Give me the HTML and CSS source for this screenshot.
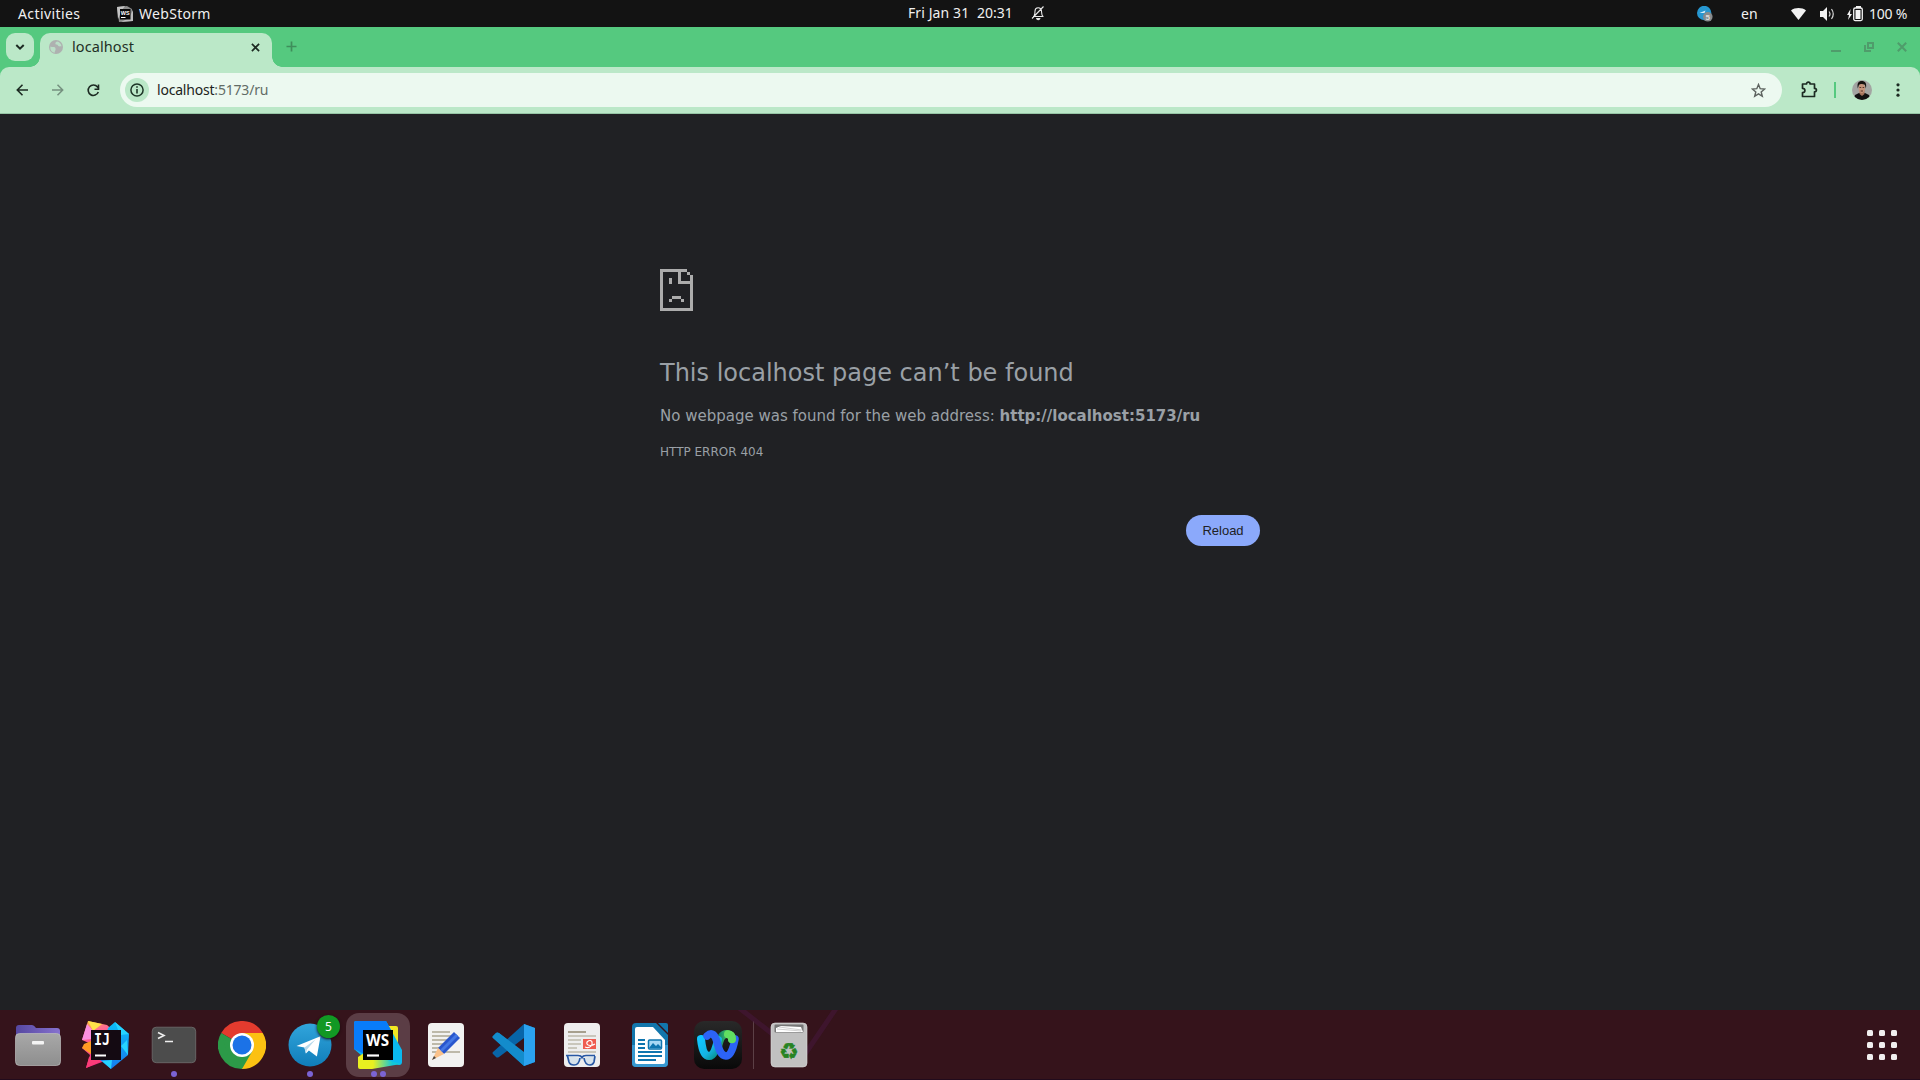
FILE: index.html
```html
<!DOCTYPE html>
<html lang="en">
<head>
<meta charset="utf-8">
<title>localhost</title>
<link rel="stylesheet" href="styles.css">
</head>
<body>
<div class="desktop">
  <header class="topbar">
    <div class="topbar-left">
      <span class="activities">Activities</span>
      <svg class="app-icon" width="16" height="16" viewBox="0 0 16 16"><path d="M0 1 10 0l5 3 1 12-14 1z" fill="#8b8b8b"/><path d="M0 1 8 0 5 4 1 13z" fill="#c4c4c4"/><path d="M12 12l4-8v11l-12 1z" fill="#bdbdbd"/><rect x="3" y="3" width="10.500" height="10.500" fill="#080808"/><text x="3.700" y="8.800" class="ws-mini">WS</text><path d="M4 11.500h4.500" stroke="#fff"/></svg>
      <span class="app-name">WebStorm</span>
    </div>
    <div class="topbar-clock">
      <span class="date">Fri Jan 31</span><span class="time">20:31</span>
      <svg class="bell" width="14" height="15" viewBox="0 0 14 15" fill="none" stroke="#e9e9e9" stroke-width="1.100"><path d="M2 10.500h10.500M3 10c1-1 .9-3 1-5 .1-4 6-4.500 6.500 0 .1 2 0 4 1.500 5.500M1 12.500 12.500.5"/><path d="M5 12h4.500c-.5 3-4 3-4.500 0z" fill="#e9e9e9" stroke="none"/></svg>
    </div>
    <div class="tray">
      <svg class="tray-telegram" width="16" height="16" viewBox="0 0 16 16"><circle cx="7.200" cy="7" r="7.200" fill="#2697d1"/><path d="M2.500 7 8.500 4.500 7.500 7z" fill="#d9eef8"/><circle cx="10.800" cy="10.800" r="4.800" fill="#878b8d"/><text x="8.600" y="13.800" class="tray-num">5</text></svg>
      <span class="lang">en</span>
      <svg class="wifi" width="15" height="12" viewBox="0 0 15 12"><path d="M0 2.500C4-.7 11-.7 15 2.500L7.500 12z" fill="#f2f2f2"/></svg>
      <svg class="volume" width="15" height="14" viewBox="0 0 15 14"><path d="M0 4h3l4-4v14L3 10H0z" fill="#f2f2f2"/><path d="M9 4.500q2 2.500 0 5M11.500 2q3.500 5 0 10" fill="none" stroke="#d7d7d7" stroke-width="1.200"/></svg>
      <svg class="battery" width="17" height="16" viewBox="0 0 17 16"><path d="M3.500 3 0 9h2l-1 5 4-6H3z" fill="#f2f2f2"/><path d="M9 0h5v2H9z" fill="#f2f2f2"/><rect x="6.700" y="2" width="8.600" height="12.600" rx="1.500" fill="none" stroke="#f2f2f2" stroke-width="1.300"/><rect x="8.500" y="4" width="5" height="9" fill="#f2f2f2"/></svg>
      <span class="percent">100 %</span>
    </div>
  </header>

  <section class="browser">
    <div class="tabstrip">
      <div class="tab-search"><svg width="10" height="6" viewBox="0 0 10 6"><path d="m1.300 1 3.700 3.600L8.700 1" fill="none" stroke="#1c2a22" stroke-width="2"/></svg></div>
      <div class="tab">
        <svg class="favicon" width="14" height="14" viewBox="0 0 14 14"><circle cx="7" cy="7" r="7" fill="#aeb1b0"/><path d="M1.500 6.500C3 7.500 6 6 6.500 8.500S5 11.500 6 12.800C2.500 12.500.8 9.500 1.500 6.500zM8 1.500c-1 1-2 1-1.500 2.700C8 5 8 3.800 9 5.500c1 1.500 2.500.5 3.500 1C12.500 4 10.500 1.800 8 1.500z" fill="#badfc7"/></svg>
        <span class="tab-title">localhost</span>
        <svg class="tab-close" width="9" height="9" viewBox="0 0 9 9"><path d="m.9.9 7.200 7.200M8.100.9.9 8.100" stroke="#1c2a22" stroke-width="1.700"/></svg>
      </div>
      <svg class="new-tab" width="11" height="11" viewBox="0 0 11 11"><path d="M5.500.5v10M.5 5.500h10" stroke="#3f8e5b" stroke-width="1.700"/></svg>
      <div class="window-buttons">
        <svg width="10" height="10" viewBox="0 0 10 10"><path d="M0 9h10" stroke="#4f9c6b" stroke-width="2"/></svg>
        <svg width="10" height="10" viewBox="0 0 10 10"><path d="M4 1h5v5H4zM1 3v6h6" fill="none" stroke="#4f9c6b" stroke-width="2"/></svg>
        <svg width="10" height="10" viewBox="0 0 10 10"><path d="m.8.8 8.400 8.400M9.200.8.800 9.200" stroke="#4f9c6b" stroke-width="2"/></svg>
      </div>
    </div>
    <div class="toolbar">
      <svg class="nav-back" width="12" height="12" viewBox="0 0 12 12"><path d="M12 6H1.500M6.500.8 1.300 6l5.200 5.200" fill="none" stroke="#1c2a22" stroke-width="1.600"/></svg>
      <svg class="nav-forward" width="12" height="12" viewBox="0 0 12 12"><path d="M0 6h10.500M5.500.8 10.700 6l-5.200 5.200" fill="none" stroke="#75907f" stroke-width="1.500"/></svg>
      <svg class="nav-reload" width="13" height="13" viewBox="0 0 13 13"><path d="M11.300 8A5.200 5.200 0 1 1 10.500 3L12 4.700M11.500 .5v4.700H7.500" fill="none" stroke="#1c2a22" stroke-width="1.600"/></svg>
      <div class="omnibox">
        <span class="site-info"><svg width="14" height="14" viewBox="0 0 14 14"><circle cx="7" cy="7" r="6.100" fill="none" stroke="#1d3527" stroke-width="1.500"/><path d="M7 6v4.500M7 3.300v1.500" stroke="#1d3527" stroke-width="1.600"/></svg></span>
        <span class="url"><span class="host">localhost</span>:5173/ru</span>
        <svg class="star" width="15" height="15" viewBox="0 0 15 15"><path d="m7.500 1.500 1.700 4.200 4.500.3-3.500 2.900 1.100 4.400-3.800-2.400-3.800 2.400 1.100-4.400L1.300 6l4.500-.3z" fill="none" stroke="#5c625e" stroke-width="1.400"/></svg>
      </div>
      <svg class="puzzle" width="17" height="17" viewBox="0 0 17 17"><path d="M1.500 3h4c0-2.500 3.600-2.500 3.600 0H13.500v4.400c2.600 0 2.600 3.400 0 3.400V15.500H1.500v-4c3.200 0 3.200-4.200 0-4.200z" fill="none" stroke="#1c2a22" stroke-width="1.700" stroke-linejoin="round"/></svg>
      <span class="toolbar-divider"></span>
      <svg class="avatar" width="20" height="20" viewBox="0 0 20 20"><defs><clipPath id="face-clip"><circle cx="10" cy="10" r="10"/></clipPath></defs><g clip-path="url(#face-clip)"><path d="M0 0h20v20H0z" fill="#a3a5a2"/><path d="M1 20l2-5 4-2h6l4 2 2 5z" fill="#111"/><path d="M7.500 10h5v4L10 16l-2.500-2z" fill="#a5745c"/><ellipse cx="9.800" cy="8.300" rx="3.200" ry="4.900" fill="#c4937a"/><path d="M5.800 8.500C4.800 3 6.500 1 9.800 1S15 3 13.900 8.500l-1.100-3.800C11 3.800 8 3.800 6.900 5z" fill="#17120f"/><path d="M7.500 7.500h1.700m1.400 0h1.600M8.700 11h2.300" stroke="#4b2b22" stroke-width=".9"/></g></svg>
      <svg class="menu" width="4" height="14" viewBox="0 0 4 14" fill="#1c2a22"><circle cx="2" cy="1.800" r="1.600"/><circle cx="2" cy="7" r="1.600"/><circle cx="2" cy="12.200" r="1.600"/></svg>
    </div>
    <main class="page">
      <div class="error">
        <svg class="sad-page" width="33" height="42" viewBox="0 0 11 14" fill="#acacac" shape-rendering="crispEdges"><path d="M0 0h9v1h1v1h1v12H0zM1 1v12h9V5H6V1zM7 1v3h3V2H9V1zM3 3h1v2H3zM4 9h3v1H4zM3 10h1v1H3zM7 10h1v1H7z" fill-rule="evenodd"/></svg>
        <h1>This localhost page can’t be found</h1>
        <p>No webpage was found for the web address: <strong>http://localhost:5173/ru</strong></p>
        <div class="error-code">HTTP ERROR 404</div>
        <button class="reload">Reload</button>
      </div>
    </main>
  </section>

  <footer class="dock">
    <svg class="wallpaper" width="110" height="70" viewBox="0 0 110 70" fill="none" stroke="#45183a" stroke-width="5"><path d="m0-3 46 36M99-3 63 50" opacity=".6"/></svg>
    <div class="dock-item"><svg width="48" height="48" viewBox="0 0 48 48"><defs><linearGradient id="folder" x2="0" y2="1"><stop stop-color="#a8a8a8"/><stop offset="1" stop-color="#8e8e8e"/></linearGradient><linearGradient id="tabfold"><stop stop-color="#5547a0"/><stop offset="1" stop-color="#8772cf"/></linearGradient></defs><path d="M2 7q0-3 3-3h13q2 0 4 3h21q3 0 3 3v16H2z" fill="url(#tabfold)"/><rect x="1.500" y="12.500" width="45" height="32" rx="4" fill="url(#folder)" stroke="#bdbdbd" stroke-width=".7"/><rect x="18" y="20" width="12" height="3.500" rx="1" fill="#f4f4f4"/></svg></div>
    <div class="dock-item"><svg width="48" height="48" viewBox="0 0 48 48"><defs><linearGradient id="ijl" x2=".3" y2="1"><stop stop-color="#ffc52e"/><stop offset=".3" stop-color="#ff6b93"/><stop offset="1" stop-color="#f7267e"/></linearGradient><linearGradient id="ijr" x2="0" y2="1"><stop stop-color="#0cbef7"/><stop offset="1" stop-color="#167bed"/></linearGradient></defs><path d="M6 0 25 4l9 8v26l-14 3-16 6 4-13-8-7 7-5-7-3z" fill="url(#ijl)"/><path d="M5 3 0 19l10-1 2-7z" fill="#fc8fe0"/><path d="m6 0 5 10 9-7z" fill="#ffe14a"/><path d="M2 23l7-3v13l-9-6z" fill="#ff9b22"/><path d="M7 36 4 47l18-8z" fill="#fb3c78"/><path d="m33 1 14 12-1 21-17 14-11-9 8-32z" fill="url(#ijr)"/><path d="m33 1 5 13 9-1zM30 39l-10 1 9 8zM39 25l7 9-1-15z" fill="#26d3ff"/><path d="M9 9h30v30H9z" fill="#140a12"/><text x="12" y="24" class="ij-label" textLength="16" lengthAdjust="spacingAndGlyphs">IJ</text><path d="M13 34.500h11" stroke="#fff" stroke-width="2"/></svg></div>
    <div class="dock-item"><svg width="48" height="48" viewBox="0 0 48 48"><rect x="2.200" y="6.200" width="43.500" height="35.500" rx="4" fill="#4c4c4c" stroke="#707070" stroke-width=".8"/><path d="m8 11.500 6 3-6 3M15 20.500h8" fill="none" stroke="#eee" stroke-width="1.600"/></svg><span class="dots"><i></i></span></div>
    <div class="dock-item"><svg width="48" height="48" viewBox="0 0 48 48"><path d="M24 24 3.200 12A24 24 0 0 1 44.800 12z" fill="#e33b2e"/><path d="M24 24 44.800 12A24 24 0 0 1 24 48z" fill="#fcc112"/><path d="M24 24v24A24 24 0 0 1 3.200 12z" fill="#2c9a48"/><path d="M24 12h20.800L34.400 30 24 48l10-18z" fill="#fcc112"/><path d="M3.200 12 13.600 30 24 36l10.400-6L24 48 11 38z" fill="#2c9a48"/><circle cx="24" cy="24" r="12" fill="#fff"/><circle cx="24" cy="24" r="9.500" fill="#1b72e7"/></svg></div>
    <div class="dock-item"><svg width="48" height="48" viewBox="0 0 48 48"><defs><linearGradient id="tg" x2="0" y2="1"><stop stop-color="#31a5dc"/><stop offset="1" stop-color="#107db9"/></linearGradient></defs><circle cx="24" cy="24" r="21.500" fill="url(#tg)"/><path d="m10.500 25 24-9.800-3.600 20.300-8-6-3 3-1.500-6z" fill="#fff"/><path d="m18.500 26.500 11-8-8.500 10-1.100 4z" fill="#b7d9eb"/></svg><span class="badge">5</span><span class="dots"><i></i></span></div>
    <div class="dock-item active"><svg width="48" height="48" viewBox="0 0 48 48"><defs><linearGradient id="wsg"><stop offset=".35" stop-color="#e9ef20"/><stop offset=".8" stop-color="#12c7d9"/></linearGradient></defs><path d="M35 5h7q2 0 2 2v17H28z" fill="#f1e823"/><path d="M0 2q0-2 2-2h30l5 9 11 20v12q0 3-3 3L7 34 0 28z" fill="#0ab9ef"/><path d="M0 2q0-2 2-2h30l5 9L10 33 0 28z" fill="#087cfa"/><path d="M4 36l6-4 37 11-29 5H6q-2 0-2-2z" fill="url(#wsg)"/><path d="M9 9h30v30H9z"/><text x="12" y="24.500" class="ws-label" textLength="23" lengthAdjust="spacingAndGlyphs">WS</text><path d="M13 34.500h12" stroke="#fff" stroke-width="2.200"/></svg><span class="dots"><i></i><i></i></span></div>
    <div class="dock-item"><svg width="48" height="48" viewBox="0 0 48 48"><rect x="6" y="2" width="36" height="44" rx="4" fill="#f2f2f1"/><path d="M10 11h18M10 15h22M10 19h18M10 23h15M10 27h12M10 31h28" stroke="#bdb9aa" stroke-width="1.800"/><path d="m16 27 16-16 6 6-16 16z" fill="#2856cd"/><path d="m18 29 16-16 2 2-16 16z" fill="#4478e5"/><path d="m16 27-6 12 12-6z" fill="#fac28b"/><path d="m12 35-2 4 4-2z" fill="#444"/></svg></div>
    <div class="dock-item"><svg width="48" height="48" viewBox="0 0 48 48"><path d="m34 3 11 4v34l-11 4-31-28q-1-1 0-2l3-3q1-1 3 0l25 20z" fill="#0877b9"/><path d="M34 3 3 31q-1 1 0 2l3 3q1 1 3 0l25-19z" fill="#0865a8"/><path d="M3 17q-1-1 0-2l3-3q1-1 3 0l25 19v14z" fill="#138ccc"/><path d="m34 3 11 4v34l-11 4z" fill="#2ba2ef"/></svg></div>
    <div class="dock-item"><svg width="48" height="48" viewBox="0 0 48 48"><rect x="6" y="2" width="36" height="44" rx="4" fill="#eee"/><path d="M10 11h18" stroke="#a7a08e" stroke-width="2"/><path d="M10 15h28M10 19h13M10 23h13M10 27h9M10 31h28" stroke="#bdb9aa" stroke-width="1.700"/><path d="M25 18h13v10H25z" fill="#ef5b50"/><path d="M27 26c5 2 8-2 7-5-1-3-6-1-5 2 1 2 5 2 8 0" fill="none" stroke="#fff" stroke-width="1.200"/><path d="M8 34.500h12q3 0 4 2 1-2 4-2h9M9.500 35l1.500 6q1 3 5 3 5 0 6-7m4 0q1 7 6 7 3 0 4-3l1-6" fill="#d7e3ec" stroke="#2757a4" stroke-width="1.700"/></svg></div>
    <div class="dock-item"><svg width="48" height="48" viewBox="0 0 48 48"><path d="M10 2h20l12 12v28q0 4-4 4H10q-4 0-4-4V6q0-4 4-4z" fill="#1276ac"/><path d="M6 24h36v18q0 4-4 4H10q-4 0-4-4z" fill="#3798d0"/><path d="M11 6h16l12 13v22q0 2-2 2H11q-2 0-2-2V8q0-2 2-2z" fill="#fff"/><path d="M32 2h8q2 0 2 2v8z" fill="#1276ac"/><path d="M12 19h7M12 23h7M12 27h7M12 31h24M12 35h24M12 39h18" stroke="#0e75af" stroke-width="2"/><rect x="22.500" y="19" width="13" height="9" rx="1" fill="#a7d8f4" stroke="#0e75af" stroke-width="1.500"/><path d="m23 27 4-5 3 3 2-2 4 4z" fill="#0e75af"/></svg></div>
    <div class="dock-item"><svg width="48" height="48" viewBox="0 0 48 48"><defs><linearGradient id="wxb" x2="0" y2="1"><stop stop-color="#292929"/><stop offset="1" stop-color="#090909"/></linearGradient><linearGradient id="wx1" x2="1" y2="1"><stop stop-color="#10c5ff"/><stop offset=".6" stop-color="#14b3e1"/><stop offset="1" stop-color="#078f8a"/></linearGradient><linearGradient id="wx2"><stop stop-color="#087d6b"/><stop offset="1" stop-color="#61df61"/></linearGradient></defs><rect width="48" height="48" rx="10" fill="url(#wxb)"/><path d="M24 26c2-9 4-13 9-13 3 0 5 2 5 5" fill="none" stroke="url(#wx2)" stroke-width="8" stroke-linecap="round"/><path d="M7 18c1 10 3 17 8 17s7-8 9-16" fill="none" stroke="url(#wx1)" stroke-width="8" stroke-linecap="round"/><path d="M13 15c5-5 8-1 10 6 2 8 4 14 9 14 4 0 7-6 9-17" fill="none" stroke="#2c63f6" stroke-width="7.500" stroke-linecap="round"/><path d="M34 13.200q4 .5 4 5" fill="none" stroke="#61df61" stroke-width="8" stroke-linecap="round"/></svg></div>
    <span class="dock-separator"></span>
    <div class="dock-item"><svg width="48" height="48" viewBox="0 0 48 48"><rect x="6" y="2" width="36" height="44" rx="4" fill="#c1c1c1" stroke="#ddd" stroke-width=".6"/><path d="M10.500 4.500h27v6h-27z" fill="#777" stroke="#777" stroke-width="2" stroke-linejoin="round"/><path d="m11 7 5-2 20 1 2 5H11z" fill="#fff"/><path d="m12 8 24 2M14 6l23 3" stroke="#bbb" stroke-width=".7"/><text x="24" y="37.500" class="recycle">♻</text></svg></div>
    <div class="show-apps"><i></i><i></i><i></i><i></i><i></i><i></i><i></i><i></i><i></i></div>
  </footer>
</div>
</body>
</html>
```
FILE: styles.css
```css
* { box-sizing: border-box; }
body { margin: 0; overflow: hidden; }
svg { display: block; flex: none; }
.desktop { width: 1920px; height: 1080px; display: flex; flex-direction: column; font-family: "Noto Sans", sans-serif; }

.topbar { height: 27px; background: #131313; color: #f0f0f0; font-size: 14px; line-height: 27px; display: grid; grid-template-columns: 908px 1fr 223px; white-space: nowrap; }
.topbar-left, .topbar-clock, .tray { display: flex; align-items: center; }
.topbar-left { padding-left: 18px; }
.activities { width: 99px; letter-spacing: 0.4px; }
.app-icon { margin-right: 6px; }
.app-name { letter-spacing: 0.3px; }
.ws-mini { font: bold 5.500px "Liberation Sans", sans-serif; fill: #fff; }
.date { width: 69px; letter-spacing: 0.100px; }
.time { width: 54px; }
.date, .time { position: relative; top: -1px; }
.tray-telegram { margin-right: 28px; }
.tray-num { font: bold 8px "Liberation Sans", sans-serif; fill: #ddd; }
.lang { width: 50px; }
.wifi { margin-right: 14px; }
.volume { margin-right: 12px; }
.battery { margin-right: 5px; }
.percent { letter-spacing: -0.2px; }

.tabstrip { height: 40px; background: #55c97f; display: flex; align-items: flex-start; padding: 6px 13px 0 6px; }
.tab-search { width: 28px; height: 28px; border-radius: 9px; background: #bbe8c8; display: grid; place-items: center; margin-right: 6px; }
.tab { position: relative; width: 232px; height: 34px; background: #bbe8c8; border-radius: 10px 10px 0 0; display: flex; align-items: center; padding: 0 12px 6px 9px; color: #1f3026; font-size: 14.500px; }
.tab::before, .tab::after { content: ""; position: absolute; bottom: 0; width: 10px; height: 10px; }
.tab::before { left: -10px; background: radial-gradient(circle at 0 0, transparent 9.500px, #bbe8c8 10px); }
.tab::after { right: -10px; background: radial-gradient(circle at 100% 0, transparent 9.500px, #bbe8c8 10px); }
.favicon { margin-right: 9px; }
.tab-title { flex: 1; line-height: 20px; padding-bottom: 2px; letter-spacing: 0.080px; }
.new-tab { margin: 8px 0 0 14px; }
.window-buttons { display: flex; gap: 23px; margin: 9px 0 0 auto; }

.browser { flex: 1; display: flex; flex-direction: column; background: #55c97f; }
.toolbar { height: 47px; background: #bbe8c8; border-radius: 9px 9px 0 0; border-bottom: 1px solid #96c5a5; display: flex; align-items: center; padding: 0 20px 0 16px; }
.nav-back, .nav-forward { margin-right: 24px; }
.nav-reload { margin: 0 20px 0 -1px; }
.omnibox { width: 1662px; height: 34px; border-radius: 17px; background: #ecf9f0; display: flex; align-items: center; padding: 0 16px 0 5px; }
.site-info { width: 24px; height: 24px; border-radius: 50%; background: #bbe8c8; display: grid; place-items: center; margin-right: 8px; }
.url { flex: 1; font-size: 14px; line-height: 20px; color: #626c66; letter-spacing: -0.2px; }
.host { color: #1c2420; }
.puzzle { margin: 0 16px 2px 19px; }
.toolbar-divider { width: 2px; height: 16px; background: #55c97f; margin-right: 16px; }
.menu { margin-left: 24px; }

.page { flex: 1; background: #202124; }
.error { width: 600px; margin: 0 auto; padding-top: 155px; font-family: "DejaVu Sans", sans-serif; color: #9aa0a6; display: flex; flex-direction: column; }
h1 { font-size: 24px; font-weight: 400; line-height: 30px; margin: 47px 0 0; }
p { font-size: 15px; line-height: 24px; margin: 16px 0 0; }
.error-code { font-size: 12px; line-height: 18px; margin-top: 15px; }
.reload { align-self: flex-end; width: 74px; height: 31px; margin-top: 54px; padding: 0; border: 0; border-radius: 16px; background: #8ba9fb; color: #202124; font: 13px "Liberation Sans", sans-serif; }

.dock { position: relative; height: 70px; background: #35131b; border-bottom: 1px solid #220b1c; display: flex; align-items: center; padding-left: 6px; gap: 4px; }
.wallpaper { position: absolute; left: 738px; top: 0; }
.dock-item { position: relative; width: 64px; height: 64px; border-radius: 13px; display: grid; place-items: center; }
.active { background: #5b3d45; }
.dots { position: absolute; left: 0; right: 0; bottom: 0; display: flex; justify-content: center; gap: 3px; }
.dots i { width: 6px; height: 6px; border-radius: 50%; background: #7b63d3; }
.badge { position: absolute; left: 39px; top: 2px; width: 23px; height: 23px; border-radius: 50%; background: #129824; color: #fff; font-size: 12px; line-height: 24px; text-align: center; box-shadow: 0 1px 3px #1a0b0e; }
.dock-separator { width: 1px; height: 48px; background: #5c4046; margin-left: -1px; }
.dock-separator + .dock-item { margin-left: -1px; }
.show-apps { margin: 0 23px 0 auto; display: grid; grid-template-columns: repeat(3, 6px); gap: 6px; }
.show-apps i { width: 6px; height: 6px; border-radius: 1.500px; background: #f1efef; }
.ij-label { font: bold 15.500px "DejaVu Sans Mono", monospace; fill: #fff; }
.ws-label { font: bold 15.500px "Open Sans", sans-serif; fill: #fff; }
.recycle { font: 22px "DejaVu Sans", sans-serif; fill: #268322; stroke: #268322; stroke-width: 0.500px; text-anchor: middle; }
```
